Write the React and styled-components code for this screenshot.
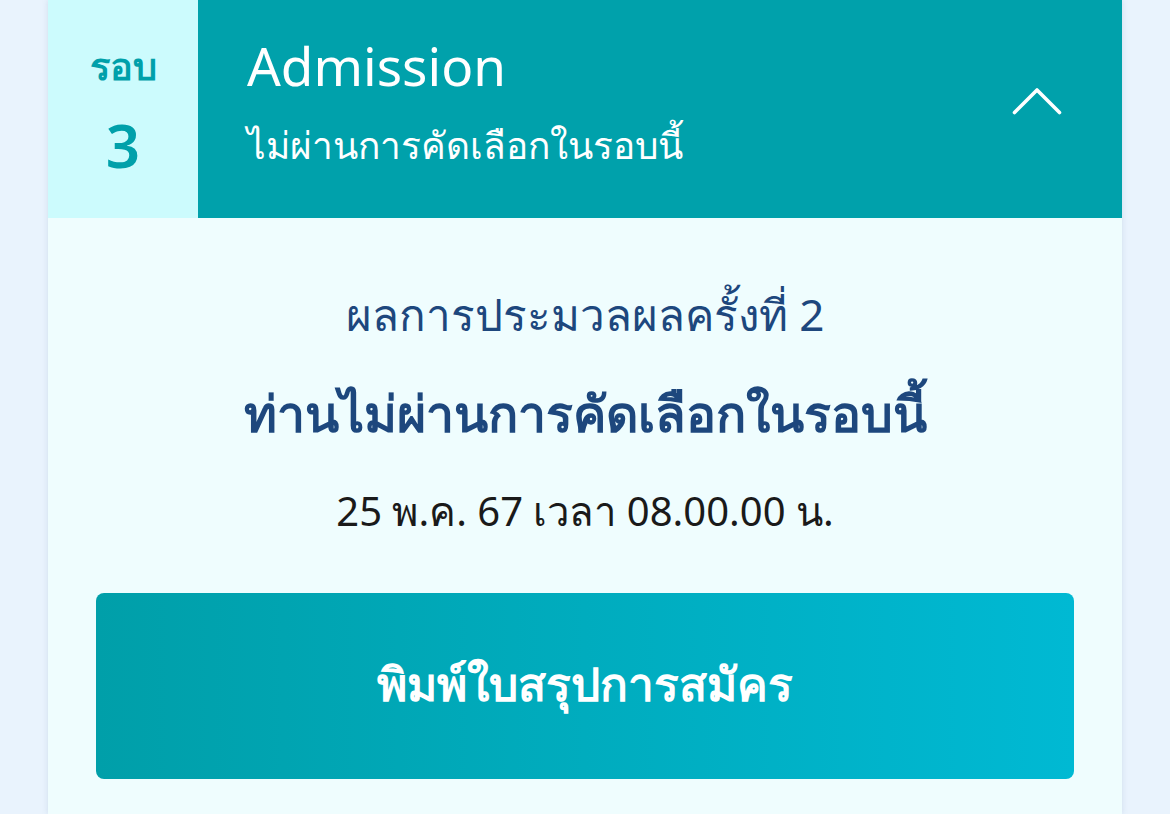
import React from "react";
import styled, { createGlobalStyle } from "styled-components";

const Global = createGlobalStyle`
  html, body { margin: 0; padding: 0; background: #e9f3fd; }
  body { font-family: "Noto Sans", "Open Sans", sans-serif; }
  * { box-sizing: border-box; }
`;

const Page = styled.div`
  width: 1170px;
  height: 814px;
  overflow: hidden;
  padding: 0 48px;
  background: #e9f3fd;
`;

const Card = styled.div`
  background: #effdfe;
  box-shadow: 0 0 6px rgba(90, 120, 160, 0.18);
  min-height: 814px;
`;

const Header = styled.div`
  display: flex;
  height: 218px;
`;

const RoundBox = styled.div`
  width: 150px;
  background: #ccfbfd;
  color: #00a0aa;
  display: flex;
  flex-direction: column;
  align-items: center;
  padding-top: 45px;
  gap: 30px;
`;

const RoundLabel = styled.div`
  font-size: 38px;
  font-weight: 700;
  line-height: 40px;
`;

const RoundNum = styled.div`
  font-size: 60px;
  font-weight: 600;
  line-height: 60px;
`;

const HeadMain = styled.div`
  flex: 1;
  background: #00a1ab;
  color: #fff;
  display: flex;
  align-items: flex-start;
  padding: 0 60px 0 49px;
`;

const Titles = styled.div`
  flex: 1;
  display: flex;
  flex-direction: column;
  padding-top: 36px;
  gap: 24px;
`;

const Title = styled.div`
  font-size: 53px;
  line-height: 60px;
  letter-spacing: 0;
`;

const Subtitle = styled.div`
  font-size: 37px;
  line-height: 50px;
`;

const ChevronWrap = styled.div`
  padding-top: 87px;
  display: flex;
`;

const Body = styled.div`
  display: flex;
  flex-direction: column;
  align-items: center;
  padding: 66px 48px 0;
`;

const Line = styled.div`
  color: ${(p) => p.$color || "#1d477d"};
  font-size: ${(p) => p.$size}px;
  font-weight: ${(p) => p.$weight || 400};
  line-height: ${(p) => p.$lh}px;
  margin-bottom: ${(p) => p.$mb || 0}px;
  white-space: nowrap;
`;

const PrintButton = styled.button`
  width: 100%;
  height: 186px;
  border: none;
  border-radius: 8px;
  background: linear-gradient(90deg, #009fa9 0%, #00b9d3 100%);
  color: #fff;
  font-family: inherit;
  font-size: 46px;
  font-weight: 700;
  padding-bottom: 4px;
  cursor: pointer;
`;

const Chevron = () => (
  <svg width="50" height="28" viewBox="0 0 50 28" fill="none">
    <path d="M2.5 25.5 L25 3 L47.5 25.5" stroke="#fff" strokeWidth="3.6" strokeLinecap="round" strokeLinejoin="round" />
  </svg>
);

export default function App() {
  return (
    <Page>
      <Global />
      <Card>
        <Header>
          <RoundBox>
            <RoundLabel>รอบ</RoundLabel>
            <RoundNum>3</RoundNum>
          </RoundBox>
          <HeadMain>
            <Titles>
              <Title>Admission</Title>
              <Subtitle>ไม่ผ่านการคัดเลือกในรอบนี้</Subtitle>
            </Titles>
            <ChevronWrap>
              <Chevron />
            </ChevronWrap>
          </HeadMain>
        </Header>
        <Body>
          <Line $size={44} $lh={60} $mb={34}>ผลการประมวลผลครั้งที่ 2</Line>
          <Line $size={50} $lh={70} $weight={700} $mb={38}>ท่านไม่ผ่านการคัดเลือกในรอบนี้</Line>
          <Line $size={40} $lh={50} $color="#1a1a1a" $mb={57}>25 พ.ค. 67 เวลา 08.00.00 น.</Line>
          <PrintButton>พิมพ์ใบสรุปการสมัคร</PrintButton>
        </Body>
      </Card>
    </Page>
  );
}
